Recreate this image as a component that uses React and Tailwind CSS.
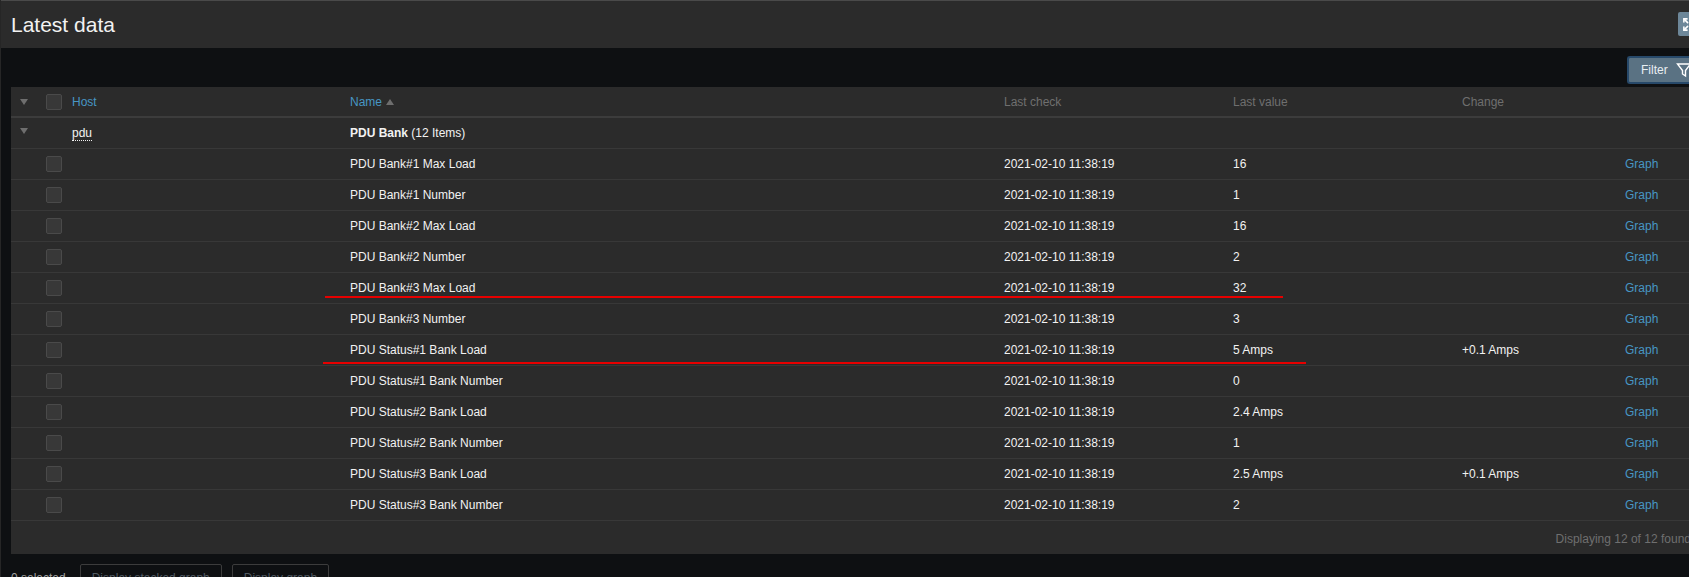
import { Expand } from "lucide-react";

const rows = [
  ["PDU Bank#1 Max Load", "16", ""],
  ["PDU Bank#1 Number", "1", ""],
  ["PDU Bank#2 Max Load", "16", ""],
  ["PDU Bank#2 Number", "2", ""],
  ["PDU Bank#3 Max Load", "32", ""],
  ["PDU Bank#3 Number", "3", ""],
  ["PDU Status#1 Bank Load", "5 Amps", "+0.1 Amps"],
  ["PDU Status#1 Bank Number", "0", ""],
  ["PDU Status#2 Bank Load", "2.4 Amps", ""],
  ["PDU Status#2 Bank Number", "1", ""],
  ["PDU Status#3 Bank Load", "2.5 Amps", "+0.1 Amps"],
  ["PDU Status#3 Bank Number", "2", ""],
];

function Check() {
  return <div className="h-4 w-4 rounded-[2px] border border-[#4a4a4a] bg-[#383838]"></div>;
}

function Arrow() {
  return (
    <div className="h-0 w-0 border-x-[4px] border-t-[6px] border-x-transparent border-t-[#6e6e6e]"></div>
  );
}

function App() {
  return (
    <div className="relative h-[577px] w-[1689px] overflow-hidden border-l border-[#262626] bg-[#0e1012] font-['Liberation_Sans',sans-serif] text-xs text-[#f2f2f2]">
      {/* page title */}
      <div className="-ml-px flex h-12 items-center justify-between border-y border-y-[#4a4a4a] border-b-[#2b2b2b] border-l border-l-[#3a3a3a] bg-[#2b2b2b] pl-[10px]">
        <h1 className="pt-px text-[21px] text-[#f2f2f2]">Latest data</h1>
        <div className="flex h-6 w-[11px] items-center overflow-hidden rounded-l-[2px] bg-[#6d8799] pl-[4px]">
          <Expand className="h-[15px] w-[15px] shrink-0 text-white" strokeWidth={2.5} />
        </div>
      </div>

      {/* filter tab */}
      <div className="flex h-[39px] items-start justify-end pt-2">
        <div className="flex h-7 w-[62px] items-center gap-[8px] overflow-hidden rounded-l-[3px] border-2 border-r-0 border-[#27496a] bg-[#5a7283] pl-[12px] text-[#e8eef2]">
          <span>Filter</span>
          <svg viewBox="0 0 16 16" className="h-4 w-4 shrink-0" fill="none" stroke="white" strokeWidth="1.4">
            <path d="M1.5 2h13L9.5 8.5V14l-3-2V8.5z" />
          </svg>
        </div>
      </div>

      {/* table */}
      <div className="ml-[10px] w-[1690px] bg-[#2b2b2b]">
        <div className="flex h-[31px] items-center border-b-2 border-[#3c3c3c] text-[#6f6f6f]">
          <div className="w-[35px] pl-[9px]"><Arrow /></div>
          <div className="w-[26px]"><Check /></div>
          <div className="w-[278px] text-[#4796c4]">Host</div>
          <div className="flex w-[654px] items-center gap-1 text-[#4796c4]">
            Name
            <div className="h-0 w-0 border-x-[4px] border-b-[6px] border-x-transparent border-b-[#6e6e6e]"></div>
          </div>
          <div className="w-[229px]">Last check</div>
          <div className="w-[229px]">Last value</div>
          <div>Change</div>
        </div>

        <div className="flex h-[31px] items-center border-b border-[#383838]">
          <div className="w-[35px] pb-1 pl-[9px]"><Arrow /></div>
          <div className="w-[26px]"></div>
          <div className="w-[278px]">
            <span className="border-b border-dotted border-[#f2f2f2] leading-[13px]">pdu</span>
          </div>
          <div>
            <b>PDU Bank</b> (12 Items)
          </div>
        </div>

        {rows.map((r) => (
          <div key={r[0]} className="flex h-[31px] items-center border-b border-[#383838]">
            <div className="w-[35px]"></div>
            <div className="w-[304px]"><Check /></div>
            <div className="w-[654px]">{r[0]}</div>
            <div className="w-[229px]">2021-02-10 11:38:19</div>
            <div className="w-[229px]">{r[1]}</div>
            <div className="w-[163px]">{r[2]}</div>
            <div className="text-[#4796c4]">Graph</div>
          </div>
        ))}

        <div className="h-[33px] pr-[10px] pt-[10px] text-right text-[#6f6f6f]">Displaying 12 of 12 found</div>
      </div>

      {/* actions */}
      <div className="ml-[10px] mt-[10px] flex items-center gap-[10px]">
        <span className="mr-[4px] text-[#a0a0a0]">0 selected</span>
        <div className="flex h-7 items-center rounded-[2px] border border-[#3c3c3c] px-[11px] text-[#515a62]">Display stacked graph</div>
        <div className="flex h-7 items-center rounded-[2px] border border-[#3c3c3c] px-[11px] text-[#515a62]">Display graph</div>
      </div>

      {/* red marker lines drawn over the screenshot */}
      <div className="absolute left-[324px] top-[296px] h-[2px] w-[958px] bg-[#e60000]"></div>
      <div className="absolute left-[322px] top-[362px] h-[2px] w-[983px] bg-[#e60000]"></div>
    </div>
  );
}

export default App;
